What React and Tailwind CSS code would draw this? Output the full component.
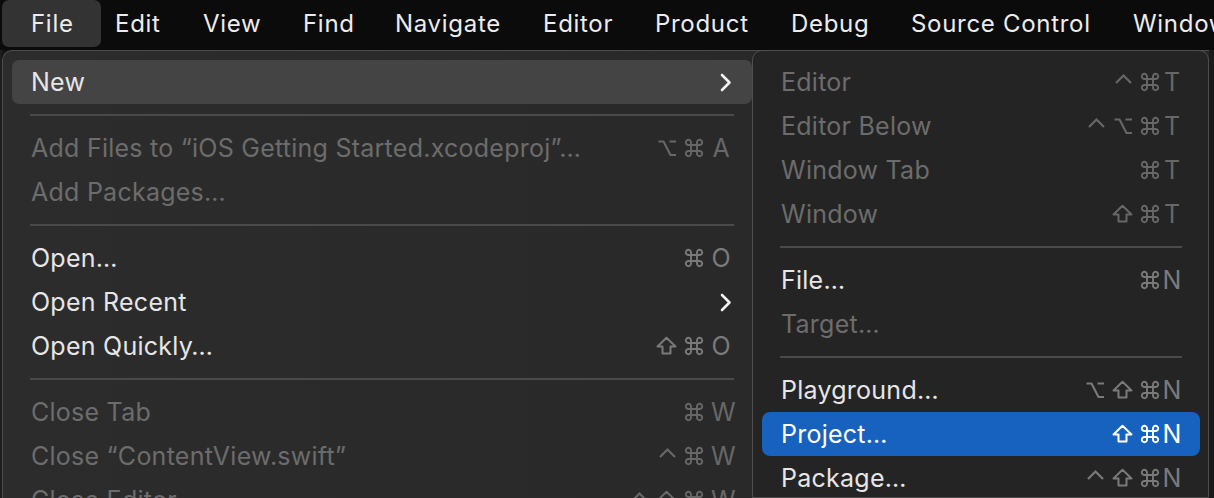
import React from "react";

const Chevron = () => (
  <svg width="12" height="19" viewBox="0 0 12 19" className="mr-[1px]">
    <polyline points="2,2 9.5,9.5 2,17" fill="none" stroke="#f2f2f2" strokeWidth="2.6" strokeLinecap="round" strokeLinejoin="round" />
  </svg>
);

const Mod = ({ m }) => {
  const common = { fill: "none", stroke: "currentColor", strokeWidth: 2, strokeLinejoin: "round", strokeLinecap: "round" };
  if (m === "cmd")
    return (
      <svg width="20" height="20" viewBox="0 0 20 20">
        <path
          d="M7,7 V4.5 A2.6,2.6 0 1,0 4.5,7 H15.5 A2.6,2.6 0 1,0 13,4.5 V15.5 A2.6,2.6 0 1,0 15.5,13 H4.5 A2.6,2.6 0 1,0 7,15.5 Z"
          {...common}
          strokeWidth="1.9"
        />
      </svg>
    );
  if (m === "opt")
    return (
      <svg width="20" height="20" viewBox="0 0 20 20">
        <path d="M1.5,3.5 H6.5 L13.5,17 H19 M12.5,3.5 H19" {...common} strokeWidth="2.1" strokeLinecap="butt" />
      </svg>
    );
  if (m === "shift")
    return (
      <svg width="21" height="20" viewBox="0 0 21 20">
        <path d="M10.5,1.8 L19.5,10.5 H14.5 V17.5 H6.5 V10.5 H1.5 Z" {...common} strokeWidth="2" />
      </svg>
    );
  // ctrl
  return (
    <svg width="19" height="20" viewBox="0 0 19 20">
      <polyline points="2,11 9.5,3.5 17,11" {...common} strokeWidth="2.2" strokeLinecap="butt" strokeLinejoin="miter" />
    </svg>
  );
};

const Shortcut = ({ mods = [], k, color, keyGap }) => (
  <div className={`flex items-center ${keyGap}`} style={{ color }}>
    <div className="flex items-center gap-[7px]">
      {mods.map((m, i) => (
        <Mod key={i} m={m} />
      ))}
    </div>
    <span className="w-[20px] text-center text-[25px] leading-none">{k}</span>
  </div>
);

const Item = ({ label, disabled, sc, chevron, hover, selected, sub }) => {
  const textColor = selected ? "text-white" : disabled ? "text-[#6c6c6c]" : "text-[#e6e6e6]";
  const scColor = selected ? "#ffffff" : disabled ? "#676767" : "#7a7a7a";
  const bg = selected ? "bg-[#1762be] rounded-[8px]" : hover ? "bg-[#444444] rounded-[7px]" : "";
  const pr = sub ? "pr-[18px]" : chevron ? "pr-[19px]" : "pr-[21px]";
  return (
    <div className={`h-[44px] shrink-0 flex items-center justify-between pl-[19px] ${pr} ${bg}`}>
      <span className={`text-[25px] leading-none tracking-[0.25px] whitespace-nowrap ${textColor}`}>{label}</span>
      {chevron ? (
        <Chevron />
      ) : sc ? (
        <Shortcut mods={sc.mods} k={sc.k} color={scColor} keyGap={sub ? "gap-[2px]" : "gap-[7px]"} />
      ) : null}
    </div>
  );
};

const Sep = () => (
  <div className="h-[22px] shrink-0 flex items-center px-[18px]">
    <div className="h-[2px] w-full bg-[#4a4a4a]" />
  </div>
);

const menuBar = [
  ["Edit", "w-[88px]"],
  ["View", "w-[100px]"],
  ["Find", "w-[92px]"],
  ["Navigate", "w-[148px]"],
  ["Editor", "w-[112px]"],
  ["Product", "w-[136px]"],
  ["Debug", "w-[120px]"],
  ["Source Control", "w-[222px]"],
  ["Window", "w-[120px]"],
];

export default function App() {
  return (
    <div
      className="w-[1214px] h-[498px] overflow-hidden bg-[#141414] flex flex-col"
      style={{ fontFamily: 'Inter, "Noto Sans", sans-serif' }}
    >
      <div className="h-[50px] shrink-0 bg-[#0b0b0b] flex items-start text-[#ececec] text-[24px] tracking-[0.7px] whitespace-nowrap overflow-hidden">
        <div className="ml-[2px] h-[47px] pl-[29px] w-[99px] shrink-0 flex items-center rounded-[7px] bg-[#333333]">File</div>
        <div className="ml-[14px] flex shrink-0">
          {menuBar.map(([t, w]) => (
            <div key={t} className={`${w} h-[47px] flex items-center shrink-0`}>
              {t}
            </div>
          ))}
        </div>
      </div>
      <div className="flex-1 flex min-h-0">
        <div className="w-[2px] shrink-0 bg-[#1e1e1e]" />
        <div className="flex shrink-0 rounded-tl-[10px] border-l border-t border-[#4c4c4c] bg-gradient-to-r from-[#2c2c2c] to-[#272727]">
          <div className="w-[749px] pl-[9px] pt-[9px] flex flex-col">
            <Item label="New" hover chevron />
            <Sep />
            <Item label="Add Files to “iOS Getting Started.xcodeproj”…" disabled sc={{ mods: ["opt", "cmd"], k: "A" }} />
            <Item label="Add Packages…" disabled />
            <Sep />
            <Item label="Open…" sc={{ mods: ["cmd"], k: "O" }} />
            <Item label="Open Recent" chevron />
            <Item label="Open Quickly…" sc={{ mods: ["shift", "cmd"], k: "O" }} />
            <Sep />
            <Item label="Close Tab" disabled sc={{ mods: ["cmd"], k: "W" }} />
            <Item label="Close “ContentView.swift”" disabled sc={{ mods: ["ctrl", "cmd"], k: "W" }} />
            <Item label="Close Editor" disabled sc={{ mods: ["ctrl", "shift", "cmd"], k: "W" }} />
          </div>
          <div className="w-[457px] -mt-px rounded-t-[10px] border border-[#4e4e4e] bg-[#242424] pl-[9px] pr-[8px] pt-[9px] flex flex-col">
            <Item sub label="Editor" disabled sc={{ mods: ["ctrl", "cmd"], k: "T" }} />
            <Item sub label="Editor Below" disabled sc={{ mods: ["ctrl", "opt", "cmd"], k: "T" }} />
            <Item sub label="Window Tab" disabled sc={{ mods: ["cmd"], k: "T" }} />
            <Item sub label="Window" disabled sc={{ mods: ["shift", "cmd"], k: "T" }} />
            <Sep />
            <Item sub label="File…" sc={{ mods: ["cmd"], k: "N" }} />
            <Item sub label="Target…" disabled />
            <Sep />
            <Item sub label="Playground…" sc={{ mods: ["opt", "shift", "cmd"], k: "N" }} />
            <Item sub label="Project…" selected sc={{ mods: ["shift", "cmd"], k: "N" }} />
            <Item sub label="Package…" sc={{ mods: ["ctrl", "shift", "cmd"], k: "N" }} />
          </div>
        </div>
        <div className="flex-1 bg-[#1a1a1a]" />
      </div>
    </div>
  );
}
